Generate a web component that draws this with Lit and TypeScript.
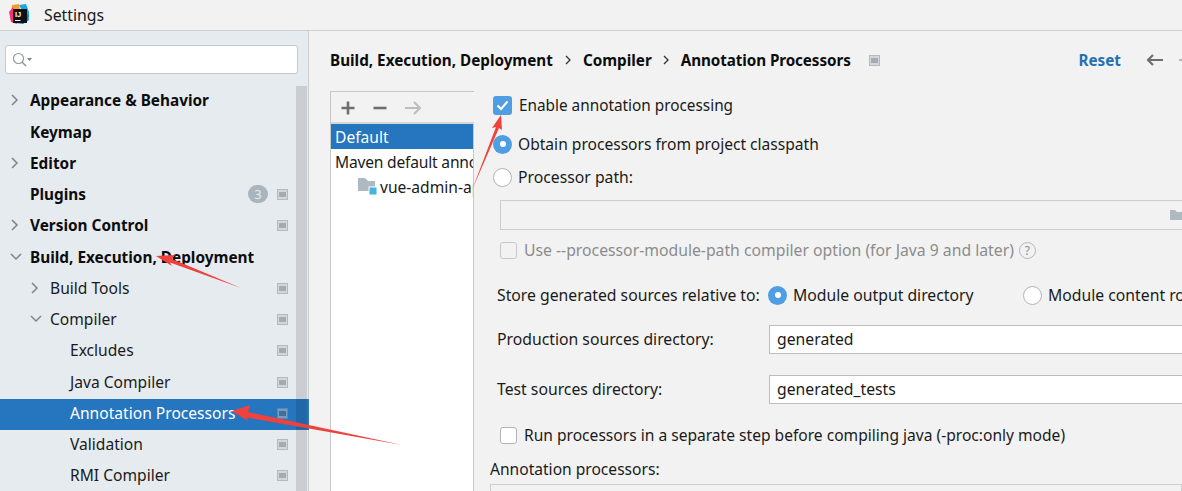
import { LitElement, html, css, svg } from "lit";
import { customElement } from "lit/decorators.js";

type Row = { t: string; lvl: number; bold?: boolean; arrow?: "r" | "d"; sel?: boolean; badge?: string; proj?: boolean };
const rows: Row[] = [
  { t: "Appearance & Behavior", lvl: 0, bold: true, arrow: "r" },
  { t: "Keymap", lvl: 0, bold: true },
  { t: "Editor", lvl: 0, bold: true, arrow: "r" },
  { t: "Plugins", lvl: 0, bold: true, badge: "3", proj: true },
  { t: "Version Control", lvl: 0, bold: true, arrow: "r", proj: true },
  { t: "Build, Execution, Deployment", lvl: 0, bold: true, arrow: "d" },
  { t: "Build Tools", lvl: 1, arrow: "r", proj: true },
  { t: "Compiler", lvl: 1, arrow: "d", proj: true },
  { t: "Excludes", lvl: 2, proj: true },
  { t: "Java Compiler", lvl: 2, proj: true },
  { t: "Annotation Processors", lvl: 2, sel: true, proj: true },
  { t: "Validation", lvl: 2, proj: true },
  { t: "RMI Compiler", lvl: 2, proj: true },
];

const chevR = svg`<path d="M2 1l5 5-5 5" fill="none" stroke="#7f8487" stroke-width="1.5"/>`;
const chevD = svg`<path d="M1 3l5 5 5-5" fill="none" stroke="#7f8487" stroke-width="1.5"/>`;

@customElement("app-root")
export class AppRoot extends LitElement {
  static styles = css`
    :host { display: block; width: 1182px; height: 491px; overflow: hidden; position: relative; font-family: "Noto Sans", "Open Sans", sans-serif; font-size: 15.6px; color: #1a1a1a; background: #f2f2f2; }
    .title { height: 31px; box-sizing: border-box; border-bottom: 1px solid #cfcfcf; display: flex; align-items: center; background: #f2f2f2; padding-left: 9px; gap: 15px; font-size: 15.8px; }
    .title svg { display: block; margin-top: -2px; }
    .title span { margin-top: -1px; }
    .body { display: flex; height: 460px; }
    .side { width: 309px; flex: none; background: linear-gradient(to left, #cdcdcd 1px, #e6ebf0 1px); display: flex; flex-direction: column; overflow: hidden; }
    .search { margin: 14px 0 0 5px; width: 293px; height: 29px; box-sizing: border-box; background: #fff; border: 1px solid #c6c9cc; border-radius: 3px; display: flex; align-items: center; padding-left: 6px; flex: none; }
    .treewrap { flex: 1; margin-top: 11px; position: relative; }
    .scroll { position: absolute; left: 296px; top: 1px; bottom: 0; width: 11px; background: rgba(0, 0, 0, 0.12); }
    .row { height: 31px; padding-bottom: 1px; display: flex; align-items: center; position: relative; white-space: nowrap; font-size: 15.6px; width: 309px; box-sizing: border-box; }
    .row:nth-child(4n + 2) { margin-top: 1px; }
    .row span { position: relative; }
    .row.bold { font-weight: 700; color: #0d0d0d; font-size: 15.35px; }
    .row.sel { color: #fff; }
    .row.sel::before { content: ""; position: absolute; left: 0; right: 0; top: 1px; height: 31px; background: #2675bf; }
    .twist { width: 12px; height: 12px; flex: none; margin-right: 8px; display: block; position: relative; }
    .twist.none { visibility: hidden; }
    .l0 { padding-left: 10px; }
    .l1 { padding-left: 30px; }
    .l2 { padding-left: 50px; }
    .end { position: absolute; right: 21px; top: 10px; width: 11px; height: 11px; display: block; }
    .row span.badge { position: absolute; right: 41px; top: 6px; width: 20px; height: 18px; border-radius: 9px; background: #aab4bc; color: #e6ebf0; font-size: 13px; font-weight: 400; display: flex; align-items: center; justify-content: center; }
    .main { flex: 1; min-width: 0; display: flex; flex-direction: column; padding-left: 21px; overflow: hidden; }
    .crumbs { height: 60px; padding-bottom: 2px; box-sizing: border-box; flex: none; display: flex; align-items: center; white-space: nowrap; font-weight: 700; font-size: 15.25px; color: #0d0d0d; }
    .crumbs .sep { width: 30px; display: flex; justify-content: center; flex: none; }
    .crumbs .sep.b { width: 29px; }
    .crumbs .tight { letter-spacing: -0.1px; }
    .crumbs .pin { margin-left: 18px; display: block; }
    .reset { margin-left: auto; color: #2470b3; flex: none; }
    .back { margin-left: 25px; margin-right: -16px; display: flex; gap: 14px; flex: none; width: 52px; }
    .content { display: flex; flex: 1; min-height: 0; }
    .left { width: 144px; flex: none; box-sizing: border-box; border: 1px solid #c8c8c8; border-right: none; border-bottom: none; display: flex; flex-direction: column; overflow: hidden; }
    .tools { height: 30px; flex: none; box-sizing: content-box; border-bottom: 2px solid #d6d6d6; display: flex; align-items: center; padding: 0 0 0 9px; gap: 16px; }
    .tools svg { display: block; margin-top: 2px; }
    .list { flex: 1; background: #fff; font-size: 15.6px; white-space: nowrap; border-right: 1px solid #c8c8c8; }
    .li { height: 25px; display: flex; align-items: center; padding-left: 4px; overflow: hidden; }
    .li.sel { background: #2675bf; color: #fff; }
    .li.maven { letter-spacing: -0.2px; }
    .li.sub { padding-left: 27px; gap: 2px; }
    .li svg { flex: none; display: block; }
    .right { flex: 1; min-width: 0; position: relative; display: flex; flex-direction: column; white-space: nowrap; padding-top: 4px; overflow: hidden; font-size: 15.75px; }
    .r { height: 20px; display: flex; align-items: center; flex: none; }
    .ind { margin-left: 19px; }
    .ind2 { margin-left: 26px; }
    .enable { font-size: 15.33px; }
    .f155 { font-size: 15.58px; }
    .cb { width: 17px; height: 17px; box-sizing: border-box; border: 1px solid #b4b4b4; border-radius: 3px; background: #fff; flex: none; margin-right: 7px; }
    .cb.on { width: 19px; height: 19px; background: #4f9ee3; border: none; display: flex; align-items: center; justify-content: center; }
    .cb.dis { background: #f2f2f2; border-color: #c8c8c8; }
    .rb { width: 19px; height: 19px; box-sizing: border-box; border-radius: 50%; border: 1px solid #b4b4b4; background: #fff; flex: none; margin-right: 6px; display: flex; align-items: center; justify-content: center; }
    .rb.on { background: #4f9ee3; border: none; }
    .rb.on::after { content: ""; width: 6px; height: 6px; border-radius: 50%; background: #fff; }
    .dim { color: #8c8c8c; }
    .help { width: 17px; height: 17px; border: 1px solid #b5b5b5; border-radius: 50%; box-sizing: border-box; margin-left: 5px; font-size: 12px; display: flex; align-items: center; justify-content: center; color: #8c8c8c; }
    .pathf { height: 30px; margin: 13px 0 0 26px; box-sizing: border-box; border: 1px solid #cdcdcd; border-right: none; flex: none; display: flex; align-items: center; justify-content: flex-end; }
    .lbl { width: 272px; margin-left: 23px; flex: none; }
    .lbl.store { width: 271px; }
    .fieldrow .lbl { padding-bottom: 2px; }
    .inp { height: 29px; flex: 1; box-sizing: border-box; border: 1px solid #bdbdbd; border-right: none; background: #fff; padding: 0 0 2px 7px; display: flex; align-items: center; }
    .fieldrow { height: 29px; }
    .opt { width: 230px; flex: none; }
    .box { height: 30px; margin: 5px 0 0 16px; border: 1px solid #cdcdcd; flex: none; box-sizing: border-box; }
    .m10 { margin-top: 10px; }
    .m13 { margin-top: 13px; }
    .m14 { margin-top: 14px; }
    .m19 { margin-top: 19px; }
    .m20 { margin-top: 20px; }
    .m21 { margin-top: 21px; }
    .m25 { margin-top: 25px; }
    .ml16 { margin-left: 16px; }
    .arrows { position: absolute; left: 0; top: 0; width: 1182px; height: 491px; pointer-events: none; }
  `;

  private pin(sel = false) {
    return svg`<rect x=".5" y=".5" width="10" height="10" fill="${sel ? "#7a9dbd" : "#d3d7db"}" stroke="${sel ? "#5f86aa" : "#b4babf"}"/><rect x="2" y="3" width="7" height="5" fill="${sel ? "#3f6f9c" : "#a4abb1"}"/>`;
  }

  render() {
    return html`
      <div class="title">
        <svg width="20" height="20" viewBox="0 0 20 20" aria-hidden="true">
          <polygon points="10,1 17,0 20,8 20,14 14,8" fill="#16a8ea"/>
          <polygon points="19,10 20,16 14,20 7,19" fill="#087cfa"/>
          <polygon points="3,1 10,0 11,6 2,10" fill="#fd9a2a"/>
          <polygon points="0,8 4,3 8,20 2,18" fill="#fb2f7e"/>
          <rect x="4" y="5" width="14" height="14" fill="#111"/>
          <rect x="6" y="16" width="5.5" height="1" fill="#fff"/>
          <text x="6" y="13" font-size="7.5" font-weight="700" fill="#fff" font-family="Liberation Sans">IJ</text>
        </svg>
        <span>Settings</span>
      </div>
      <div class="body">
        <div class="side">
          <div class="search">
            <svg width="22" height="16" viewBox="0 0 22 16" aria-hidden="true">
              <circle cx="6.5" cy="6.5" r="5" fill="none" stroke="#8f9498" stroke-width="1.1"/>
              <path d="M10 10l4 4" stroke="#8f9498" stroke-width="1.5"/>
              <path d="M15 6h5l-2.5 3z" fill="#7d8287"/>
            </svg>
          </div>
          <div class="treewrap">
            ${rows.map(
              (r) => html`
                <div class="row l${r.lvl} ${r.bold ? "bold" : ""} ${r.sel ? "sel" : ""}">
                  <svg class="twist ${r.arrow ? "" : "none"}" viewBox="0 0 12 12" aria-hidden="true">${r.arrow === "d" ? chevD : chevR}</svg>
                  <span>${r.t}</span>
                  ${r.badge ? html`<span class="badge">${r.badge}</span>` : ""}
                  ${r.proj ? html`<svg class="end" viewBox="0 0 11 11" aria-hidden="true">${this.pin(r.sel)}</svg>` : ""}
                </div>
              `
            )}
            <div class="scroll"></div>
          </div>
        </div>
        <div class="main">
          <div class="crumbs">
            <span>Build, Execution, Deployment</span>
            <span class="sep"><svg width="6" height="10" viewBox="0 0 6 10" aria-hidden="true"><path d="M1 1l4 4-4 4" fill="none" stroke="#333" stroke-width="1.3"/></svg></span>
            <span>Compiler</span>
            <span class="sep b"><svg width="6" height="10" viewBox="0 0 6 10" aria-hidden="true"><path d="M1 1l4 4-4 4" fill="none" stroke="#333" stroke-width="1.3"/></svg></span>
            <span class="tight">Annotation Processors</span>
            <svg class="pin" width="11" height="11" viewBox="0 0 11 11" aria-hidden="true">${this.pin()}</svg>
            <span class="reset">Reset</span>
            <span class="back">
              <svg width="18" height="12" viewBox="0 0 18 12" aria-hidden="true"><path d="M17 6H2M7 1L2 6l5 5" fill="none" stroke="#6e6e6e" stroke-width="2.2"/></svg>
              <svg width="18" height="12" viewBox="0 0 18 12" aria-hidden="true"><path d="M1 6h15M11 1l5 5-5 5" fill="none" stroke="#b8b8b8" stroke-width="2"/></svg>
            </span>
          </div>
          <div class="content">
            <div class="left">
              <div class="tools">
                <svg width="16" height="16" viewBox="0 0 16 16" aria-hidden="true"><path d="M8 1.5v13M1.5 8h13" stroke="#6e6e6e" stroke-width="2.6"/></svg>
                <svg width="16" height="16" viewBox="0 0 16 16" aria-hidden="true"><path d="M1.5 8h13" stroke="#6e6e6e" stroke-width="2.6"/></svg>
                <svg width="18" height="16" viewBox="0 0 18 16" aria-hidden="true"><path d="M1 8h15M10 2l6 6-6 6" fill="none" stroke="#bdbdbd" stroke-width="2"/></svg>
              </div>
              <div class="list">
                <div class="li sel">Default</div>
                <div class="li maven">Maven default annotation</div>
                <div class="li sub">
                  <svg width="20" height="18" viewBox="0 0 20 18" aria-hidden="true"><path d="M0 0h7l3 3h7v10H0z" fill="#afb9c0"/><rect x="11" y="9" width="8" height="8" fill="#40b6e0" stroke="#fff"/></svg>
                  <span>vue-admin-api</span>
                </div>
              </div>
            </div>
            <div class="right">
              <div class="r ind enable"><span class="cb on"><svg width="13" height="11" viewBox="0 0 13 11" aria-hidden="true"><path d="M1.5 5.5l3.5 3.5 6.5-7.5" fill="none" stroke="#fff" stroke-width="2"/></svg></span>Enable annotation processing</div>
              <div class="r ind m19 f155"><span class="rb on"></span>Obtain processors from project classpath</div>
              <div class="r ind m13"><span class="rb"></span>Processor path:</div>
              <div class="pathf">
                <svg width="12" height="14" viewBox="0 0 12 14" aria-hidden="true"><path d="M0 2h5l2 2h5v8H0z" fill="#afb9c0"/></svg>
              </div>
              <div class="r ind2 dim m10"><span class="cb dis"></span>Use --processor-module-path compiler option (for Java 9 and later)<span class="help">?</span></div>
              <div class="r m25"><span class="lbl store">Store generated sources relative to:</span><span class="rb on"></span><span class="opt">Module output directory</span><span class="rb"></span>Module content root</div>
              <div class="r fieldrow m20"><span class="lbl">Production sources directory:</span><span class="inp">generated</span></div>
              <div class="r fieldrow m21"><span class="lbl">Test sources directory:</span><span class="inp">generated_tests</span></div>
              <div class="r ind2 m21 f155"><span class="cb"></span>Run processors in a separate step before compiling java (-proc:only mode)</div>
              <div class="r m14 ml16 f155">Annotation processors:</div>
              <div class="box"></div>
            </div>
          </div>
        </div>
      </div>
      <svg class="arrows" viewBox="0 0 1182 491" aria-hidden="true">
        <polygon points="241,288 170,262.5 172,266 156,256 175,255 172,259" fill="#f0413c"/>
        <polygon points="402,445 247,417.5 248,421 232,411 250,405 248,412" fill="#f0413c"/>
        <polygon points="472,190 496,127 492,128 501,115 502,130 499,128" fill="#f0413c"/>
      </svg>
    `;
  }
}
